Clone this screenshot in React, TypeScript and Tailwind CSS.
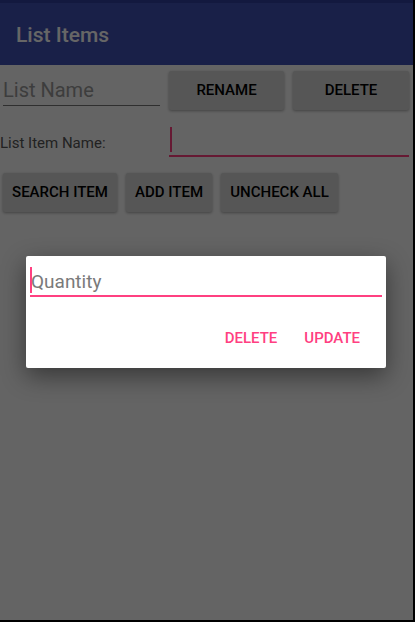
const FONT = { fontFamily: 'Roboto, "Noto Sans", sans-serif' };

function RaisedButton({ label, className }: { label: string; className: string }) {
  return (
    <button
      className={`h-[39px] bg-[#d6d7d7] rounded-[2px] shadow-[0_1px_3px_rgba(0,0,0,0.35)] text-[15px] font-medium text-black uppercase ${className}`}
    >
      {label}
    </button>
  );
}

export default function App() {
  return (
    <div className="w-[415px] h-[622px] bg-black" style={FONT}>
      <div className="relative w-[413px] h-[620px] bg-[#fafafa] overflow-hidden flex flex-col">
        {/* Status bar + toolbar */}
        <div className="h-[3px] bg-[#303f9f]" />
        <div className="h-[62px] bg-[#3f51b5] flex items-center px-4 pt-[3px]">
          <h1 className="text-[21px] font-medium text-white">List Items</h1>
        </div>

        {/* List name row */}
        <div className="flex items-center pt-[6px]">
          <div className="ml-[3px] w-[157px] h-[39px] flex flex-col justify-end">
            <span className="text-[20px] text-[#999] leading-none">List Name</span>
            <div className="h-[1px] bg-[#777] mt-[5px] mb-[4px]" />
          </div>
          <RaisedButton label="Rename" className="ml-[9px] w-[115px]" />
          <RaisedButton label="Delete" className="ml-[9px] w-[116px]" />
        </div>

        {/* List item name row */}
        <div className="flex items-end mt-[17px] h-[30px]">
          <span className="text-[15px] text-[#555] w-[169px] mb-[3px]">List Item Name:</span>
          <div className="w-[240px] h-[30px] flex flex-col">
            <div className="flex-1 flex">
              <div className="w-[2px] h-[25px] ml-[1px] bg-[#ff4081]" />
            </div>
            <div className="h-[2px] bg-[#ff4081]" />
          </div>
        </div>

        {/* Action row */}
        <div className="flex mt-[16px] ml-[3px] gap-[9px]">
          <RaisedButton label="Search Item" className="w-[114px]" />
          <RaisedButton label="Add Item" className="w-[86px]" />
          <RaisedButton label="Uncheck All" className="w-[117px]" />
        </div>

        {/* Dim + dialog */}
        <div className="absolute inset-0 bg-black/60">
          <div className="absolute left-[26px] top-[256px] w-[360px] h-[112px] bg-white rounded-[2px] shadow-[0_8px_24px_rgba(0,0,0,0.45)] flex flex-col">
            <div className="mx-[4px] mt-[10px] h-[31px] flex flex-col">
              <div className="flex-1 flex items-end">
                <div className="w-[2px] h-[26px] bg-[#ff4081] self-start mt-[1px]" />
                <span className="text-[19px] text-[#7a7a7a] leading-none mb-[4px] -ml-[1px]">Quantity</span>
              </div>
              <div className="h-[2px] bg-[#ff4081]" />
            </div>
            <div className="flex justify-end items-center gap-[27px] mt-[30px] mr-[26px]">
              <span className="text-[15px] font-medium text-[#ff4081]">DELETE</span>
              <span className="text-[15px] font-medium text-[#ff4081]">UPDATE</span>
            </div>
          </div>
        </div>
      </div>
    </div>
  );
}
